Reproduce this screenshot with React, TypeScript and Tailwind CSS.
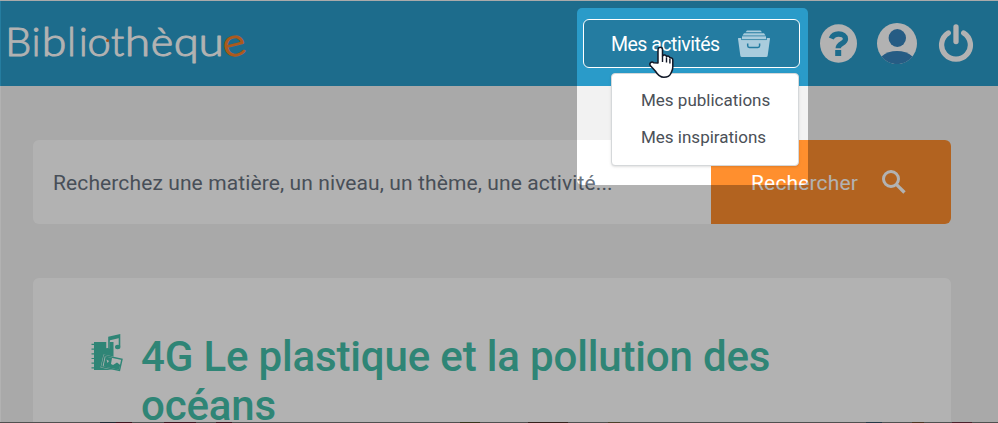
import React from "react";

const LETTERS: [string, number, number][] = [
  ["B", 2.2, 1.07],
  ["i", 28.7, 1],
  ["b", 38.8, 1.16],
  ["l", 64.3, 1],
  ["i", 76, 1],
  ["o", 84.4, 1.08],
  ["t", 108, 1],
  ["h", 121.8, 1.2],
  ["è", 147.8, 1.12],
  ["q", 170.8, 1.18],
  ["u", 195.6, 1.2],
];

function Logo() {
  return (
    <svg width="256" height="60" viewBox="0 0 256 60" role="img" aria-label="Bibliothèque" className="shrink-0">
      <g fontFamily="Lato, sans-serif" fontWeight="300" fontSize="38.5" fill="#fff" stroke="#fff" strokeWidth="1" strokeLinejoin="round">
        {LETTERS.map(([char, x, stretch], i) => (
          <text key={i} transform={`translate(${x} 42.300) scale(${stretch} 1)`}>
            {char}
          </text>
        ))}
      </g>
      <text
        transform="translate(219.800 42) rotate(-14 11 -10) scale(1.14 1)"
        fontFamily="Lato, sans-serif"
        fontWeight="300"
        fontSize="38.5"
        fill="#f5822a"
        stroke="#f5822a"
        strokeWidth="1.4"
        strokeLinejoin="round"
      >
        e
      </text>
      <circle cx="104.500" cy="26.500" r="1.6" fill="#e87a2c" />
    </svg>
  );
}

function ArchiveIcon() {
  return (
    <svg width="34" height="28" viewBox="0 0 34 28" fill="#a9ccdd" className="shrink-0">
      <path d="M10 .5h13.5l1.500 1.700h-16.500z" />
      <path d="M7 3.200h20l1.500 2.300h-23z" />
      <path d="M5 6.300h24v3.200h-24z" />
      <path d="M1.500 8h3v2h25v-2h3q.6 0 .5.800l-2.300 16.700q-.2 1.500-1.600 1.500h-24.200q-1.400 0-1.600-1.500l-2.300-16.700q-.1-.800.500-.8z" />
      <path d="M10.700 13.500v2.300q0 1.700 1.700 1.700h8.500q1.700 0 1.700-1.700v-2.300" fill="none" stroke="#247ca1" strokeWidth="1.500" />
      <path d="M4.500 6v3.600h25v-3.600" fill="none" stroke="#247ca1" strokeWidth=".5" />
    </svg>
  );
}

function HelpIcon() {
  return (
    <svg width="38" height="39" viewBox="0 0 38 39" className="shrink-0">
      <ellipse cx="18.500" cy="19.500" rx="18.500" ry="19.300" fill="#fff" />
      <path d="M11.200 14.500c1.500-3.200 4-4.500 7.300-4.500 4.300 0 7 2 7 5 0 4.700-7.300 4.400-7.300 9.200" fill="none" stroke="#2a9bc9" strokeWidth="5.300" />
      <rect x="15.200" y="26" width="6" height="6" fill="#2a9bc9" />
    </svg>
  );
}

function UserIcon() {
  return (
    <svg width="40" height="42" viewBox="0 0 40 42" className="shrink-0">
      <ellipse cx="20" cy="20.500" rx="20" ry="20.500" fill="#fff" />
      <ellipse cx="20.300" cy="15" rx="8.700" ry="9" fill="#3785bd" />
      <path d="M4.500 33.500c8-7.300 23-7.300 31 0-8 10-23 10-31 0z" fill="#3785bd" />
    </svg>
  );
}

function PowerIcon() {
  return (
    <svg width="36" height="40" viewBox="0 0 36 40" fill="none" stroke="#fff" strokeLinecap="round" className="shrink-0">
      <path d="M10.300 9a14.400 14.200 0 1 0 15.400 0" strokeWidth="5.300" />
      <path d="M18 3v14.500" strokeWidth="5.300" />
    </svg>
  );
}

function BookIcon() {
  return (
    <svg width="34" height="40" viewBox="0 0 34 40" fill="#44bfa9" className="shrink-0">
      <path d="M4 10h19.500v28h-19.500v-1.500h-2.500v-1.200h2.500v-3.500h-2.500v-1.200h2.500v-3.500h-2.500v-1.200h2.500v-3.500h-2.500v-1.200h2.500v-3.500h-2.500v-1.200h2.500v-3.500h-2.500v-1.200h2.500z" />
      <path d="M18 17V4.500l12-3V14" fill="none" stroke="#fff" strokeWidth="3.500" />
      <path d="M19 18V5.500L29.500 3v11.500" fill="none" stroke="#44bfa9" strokeWidth="1.600" />
      <path d="M19 5.500l10.500-2.500v3l-10.500 2.500z" />
      <ellipse cx="17.200" cy="18.200" rx="2.700" ry="2.200" />
      <ellipse cx="27.700" cy="15" rx="2.700" ry="2.200" />
      <path d="M13.500 22.500l19.500 4-3 13-19.500-4z" fill="#fff" />
      <path d="M14.300 23.500l17.700 3.700-2.500 11.300-17.700-3.700z" fill="#fff" stroke="#44bfa9" strokeWidth="1.400" />
      <path d="M15.500 24.500l6.500 1.400-1 6.200 2 1 4-2.500 3.200 2.500-1.100 4.700-15.600-3.300z" />
      <path d="M16.500 27.500l2.500 1.500-1.500 2z" fill="#fff" />
    </svg>
  );
}

function HandCursor() {
  return (
    <svg width="26" height="34" viewBox="0 0 26 34" className="absolute left-[649px] top-[45px]">
      <path
        d="M9 17V3.800c0-3.300 4.500-3.300 4.500 0V10c1-1.700 3.800-1.300 4 .7 1.200-1.200 3.300-.5 3.400 1.300 1.400-.8 2.900.2 2.900 2v7c0 3-1 4.200-2 6.500-1 2.500-3.500 3.800-7 3.800-4.500 0-6.500-3-8.500-6.300L1.500 19.800c-1.800-2.500 1-4.800 3.300-3z"
        fill="#fff"
        stroke="#111827"
        strokeWidth="1.500"
        strokeLinejoin="round"
      />
      <path d="M13.500 10v6M17.500 11.500v5M20.900 13v4.500" stroke="#111827" strokeWidth="1.400" fill="none" />
    </svg>
  );
}

export default function App() {
  return (
    <div className="relative flex h-[423px] w-[998px] flex-col overflow-hidden border-t border-t-[#aaaaaa] bg-[#f2f2f2] font-[Roboto,sans-serif]">
      <header className="flex h-[85px] shrink-0 items-center justify-between border-l border-[#35b3e6] bg-[#2a9bc9] pl-0.5 pr-6">
        <Logo />
        <div className="flex items-center">
          <button className="mr-5 flex h-[49px] w-[217px] items-center justify-between rounded-md border border-white bg-[#247ca1] pl-[27px] pr-7 text-[19.500px] text-white">
            <span className="whitespace-nowrap pt-0.5 tracking-[-0.500px]">Mes activités</span>
            <ArchiveIcon />
          </button>
          <div className="flex items-center">
            <HelpIcon />
            <div className="ml-[19px] flex"><UserIcon /></div>
            <div className="ml-[21px] flex"><PowerIcon /></div>
          </div>
        </div>
      </header>

      <main className="flex min-h-0 grow flex-col border-l border-white pl-8 pr-[47px] pt-[54px]">
        <form className="flex h-[84px] shrink-0 overflow-hidden rounded-md bg-white">
          <div className="flex w-[678px] items-center whitespace-nowrap pl-5 pt-[3px] text-[21px] tracking-[0.110px] text-[#68727e]">
            Recherchez une matière, un niveau, un thème, une activité...
          </div>
          <button type="button" className="flex grow items-center bg-[#ff8f2e] pl-10 text-[21px] tracking-[0.150px] text-white">
            <span className="pt-[3px]">Rechercher</span>
            <svg width="24" height="24" viewBox="0 0 24 24" fill="none" stroke="#fff" strokeWidth="3" className="ml-6">
              <circle cx="9" cy="9" r="7.500" />
              <path d="M14.300 14.300l8.200 8.200" strokeWidth="3.300" />
            </svg>
          </button>
        </form>

        <article className="mt-[54px] flex grow items-start rounded-t-md bg-white pl-[57px] pt-[54px]">
          <BookIcon />
          <h1 className="ml-[17px] w-[700px] text-[42px] font-medium leading-[49px] tracking-[-0.160px] text-[#44bfa9]">
            4G Le plastique et la pollution des océans
          </h1>
        </article>
      </main>

      <div className="flex h-px shrink-0 bg-[#737373]">
        <span className="ml-[100px] w-4 bg-[#303a48]" />
        <span className="w-4 bg-[#5a1d2c]" />
        <span className="ml-8 w-8 bg-[#5a1d2c]" />
        <span className="ml-5 w-4 bg-[#5a1d2c]" />
        <span className="ml-[228px] w-5 bg-[#4f4b2a]" />
        <span className="ml-12 w-10 bg-[#4b3029]" />
        <span className="ml-10 w-3 bg-[#6b5c3b]" />
        <span className="ml-[246px] w-4 bg-[#345064]" />
        <span className="ml-[30px] w-3 bg-[#6e4b31]" />
        <span className="ml-7 w-5 bg-[#6a3040]" />
      </div>

      <div className="pointer-events-none absolute left-[577px] top-[7px] h-[176.500px] w-[231px] rounded-[5px] shadow-[0_0_0_1200px_rgba(0,0,0,0.3)]" />

      <div className="absolute left-[611px] top-[72px] flex h-[93px] w-[188px] flex-col rounded border border-[#d5d8da] bg-white pl-[29px] pt-2 text-[17px] text-[#4b5057] shadow-sm">
        <span className="flex h-[37px] items-center">Mes publications</span>
        <span className="flex h-[37px] items-center">Mes inspirations</span>
      </div>
      <HandCursor />
    </div>
  );
}
